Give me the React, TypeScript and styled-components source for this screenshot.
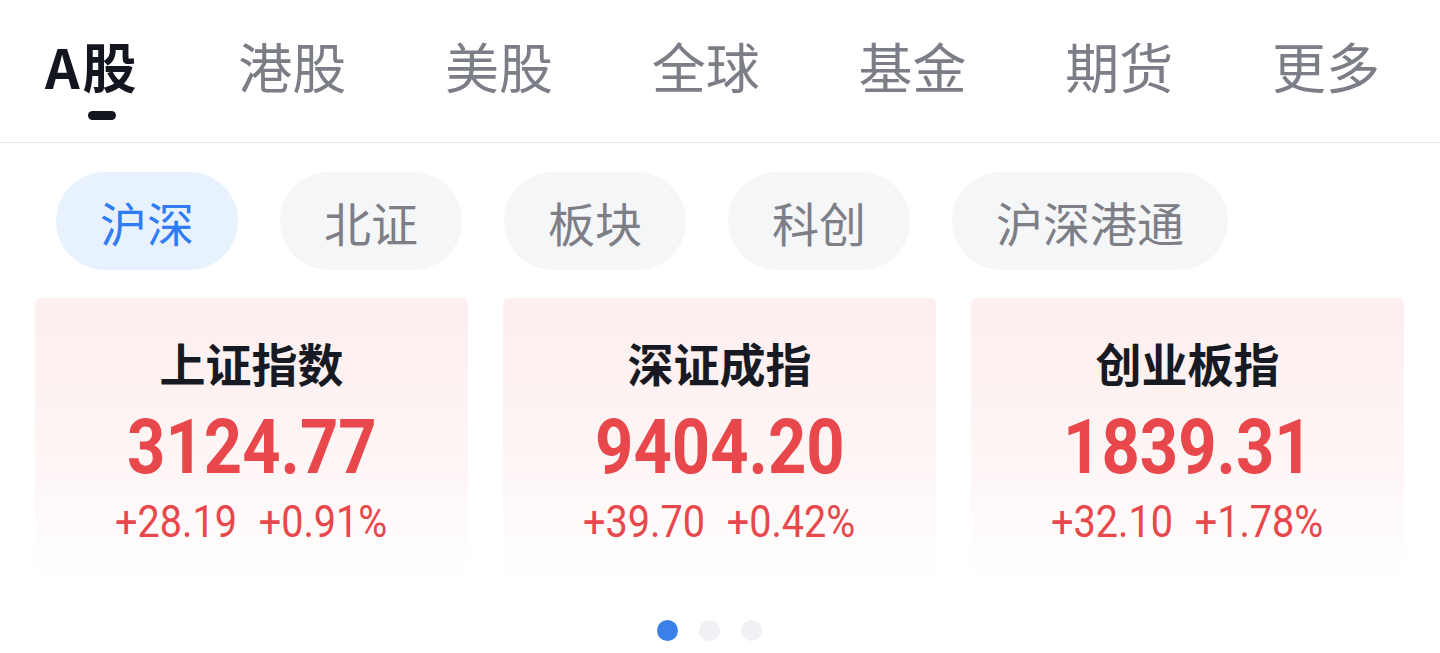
import * as React from "react";
import styled, { createGlobalStyle } from "styled-components";

const GlobalStyle = createGlobalStyle`
    html, body {
        margin: 0;
        padding: 0;
        background: #ffffff;
        font-family: "Noto Sans CJK SC", "Noto Sans", sans-serif;
    }
`;

const Page = styled.div`
    width: 1440px;
    height: 653px;
    overflow: hidden;
    display: flex;
    flex-direction: column;
`;

const TabBar = styled.div`
    height: 143px;
    box-sizing: border-box;
    border-bottom: 1px solid #e7e7ea;
    display: flex;
    justify-content: space-between;
    padding: 27px 60px 0 45px;
`;

const Tab = styled.div`
    display: flex;
    flex-direction: column;
    align-items: flex-start;
    font-size: 54px;
    line-height: 78px;
    font-weight: ${({ $active }) => ($active ? 700 : 400)};
    letter-spacing: ${({ $active }) => ($active ? "3px" : "0")};
    color: ${({ $active }) => ($active ? "#13151f" : "#7c7e87")};
`;

const Indicator = styled.div`
    width: 28px;
    height: 9px;
    border-radius: 5px;
    background: #13151f;
    margin: 6px 0 0 43px;
`;

const Pills = styled.div`
    display: flex;
    gap: 42px;
    padding: 29px 0 0 56px;
`;

const Pill = styled.div`
    height: 98px;
    padding: 0 44px;
    border-radius: 49px;
    display: flex;
    align-items: center;
    font-size: 47px;
    background: ${({ $active }) => ($active ? "#e8f1fe" : "#f5f6f8")};
    color: ${({ $active }) => ($active ? "#2f7cf6" : "#7d7e86")};
`;

const Cards = styled.div`
    display: grid;
    grid-template-columns: repeat(3, 433px);
    gap: 35px;
    padding: 28px 0 0 35px;
`;

const Card = styled.div`
    height: 284px;
    border-radius: 6px;
    background: linear-gradient(180deg, #fdeeef 0%, #fef5f5 55%, #ffffff 100%);
    display: flex;
    flex-direction: column;
    align-items: center;
    padding-top: 32px;
    box-sizing: border-box;
`;

const Title = styled.div`
    font-size: 46px;
    line-height: 64px;
    font-weight: 700;
    color: #171a23;
`;

const Value = styled.div`
    font-family: Roboto, "Liberation Sans", sans-serif;
    font-size: 76px;
    line-height: 90px;
    font-weight: 700;
    color: #e8474b;
    transform: scaleX(0.88);
    margin-top: 8px;
`;

const Change = styled.div`
    display: flex;
    gap: 24px;
    font-family: Roboto, "Liberation Sans", sans-serif;
    font-size: 44px;
    line-height: 60px;
    color: #e8474b;
    transform: scaleX(0.9);
`;

const Dots = styled.div`
    display: flex;
    justify-content: center;
    gap: 21px;
    padding: 38px 22px 0 0;
`;

const Dot = styled.div`
    width: 21px;
    height: 21px;
    border-radius: 50%;
    background: ${({ $active }) => ($active ? "#3b7fe8" : "#f0f1f5")};
`;

const tabs = ["A股", "港股", "美股", "全球", "基金", "期货", "更多"];
const pills = ["沪深", "北证", "板块", "科创", "沪深港通"];
const indices = [
    { name: "上证指数", value: "3124.77", diff: "+28.19", pct: "+0.91%" },
    { name: "深证成指", value: "9404.20", diff: "+39.70", pct: "+0.42%" },
    { name: "创业板指", value: "1839.31", diff: "+32.10", pct: "+1.78%" },
];

export default function App() {
    return (
        <Page>
            <GlobalStyle />
            <TabBar>
                {tabs.map((t, i) => (
                    <Tab key={t} $active={i === 0}>
                        {t}
                        {i === 0 && <Indicator />}
                    </Tab>
                ))}
            </TabBar>
            <Pills>
                {pills.map((p, i) => (
                    <Pill key={p} $active={i === 0}>
                        {p}
                    </Pill>
                ))}
            </Pills>
            <Cards>
                {indices.map((d) => (
                    <Card key={d.name}>
                        <Title>{d.name}</Title>
                        <Value>{d.value}</Value>
                        <Change>
                            <span>{d.diff}</span>
                            <span>{d.pct}</span>
                        </Change>
                    </Card>
                ))}
            </Cards>
            <Dots>
                <Dot $active />
                <Dot />
                <Dot />
            </Dots>
        </Page>
    );
}
